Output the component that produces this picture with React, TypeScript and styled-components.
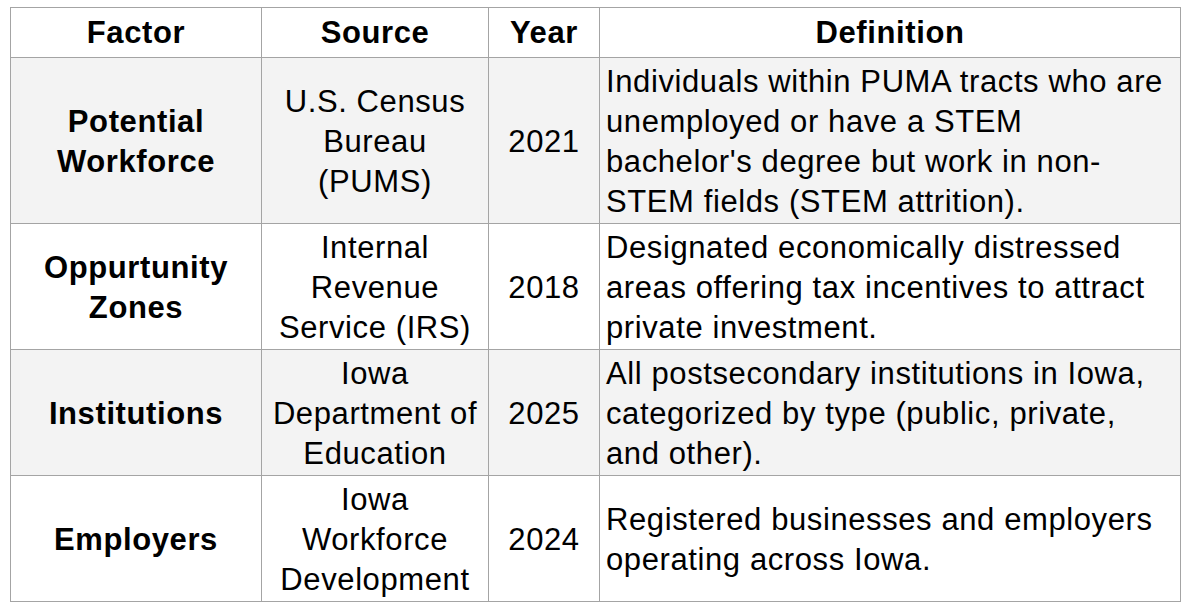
import React from 'react';
import styled, { createGlobalStyle } from 'styled-components';

type Row = {
  factor: string[];
  source: string[];
  year: string;
  definition: string[];
  shaded?: boolean;
  height: number;
};

const rows: Row[] = [
  {
    factor: ['Potential', 'Workforce'],
    source: ['U.S. Census', 'Bureau', '(PUMS)'],
    year: '2021',
    definition: [
      'Individuals within PUMA tracts who are',
      'unemployed or have a STEM',
      "bachelor's degree but work in non-",
      'STEM fields (STEM attrition).',
    ],
    shaded: true,
    height: 166,
  },
  {
    factor: ['Oppurtunity', 'Zones'],
    source: ['Internal', 'Revenue', 'Service (IRS)'],
    year: '2018',
    definition: [
      'Designated economically distressed',
      'areas offering tax incentives to attract',
      'private investment.',
    ],
    height: 126,
  },
  {
    factor: ['Institutions'],
    source: ['Iowa', 'Department of', 'Education'],
    year: '2025',
    definition: [
      'All postsecondary institutions in Iowa,',
      'categorized by type (public, private,',
      'and other).',
    ],
    shaded: true,
    height: 126,
  },
  {
    factor: ['Employers'],
    source: ['Iowa', 'Workforce', 'Development'],
    year: '2024',
    definition: ['Registered businesses and employers', 'operating across Iowa.'],
    height: 126,
  },
];

export default function App() {
  return (
    <>
      <GlobalStyle />
      <Page>
        <Table>
          <colgroup>
            <col style={{ width: 251 }} />
            <col style={{ width: 227 }} />
            <col style={{ width: 111 }} />
            <col style={{ width: 581 }} />
          </colgroup>
          <thead>
            <TableRow $height={50}>
              <HeadCell>Factor</HeadCell>
              <HeadCell>Source</HeadCell>
              <HeadCell>Year</HeadCell>
              <HeadCell>Definition</HeadCell>
            </TableRow>
          </thead>
          <tbody>
            {rows.map((r) => (
              <TableRow key={r.year} $height={r.height} $shaded={r.shaded}>
                <FactorCell>
                  {r.factor.map((l, i) => (
                    <Line key={i}>{l}</Line>
                  ))}
                </FactorCell>
                <Cell>
                  {r.source.map((l, i) => (
                    <Line key={i}>{l}</Line>
                  ))}
                </Cell>
                <Cell>{r.year}</Cell>
                <DefinitionCell>
                  {r.definition.map((l, i) => (
                    <Line key={i}>{l}</Line>
                  ))}
                </DefinitionCell>
              </TableRow>
            ))}
          </tbody>
        </Table>
      </Page>
    </>
  );
}

const GlobalStyle = createGlobalStyle`
  body {
    margin: 0;
    background: #ffffff;
    font-family: "Liberation Sans", Arial, sans-serif;
  }
`;

const Page = styled.div`
  padding: 7px 0 0 10px;
`;

const Table = styled.table`
  border-collapse: collapse;
  table-layout: fixed;
  width: 1171px;
  font-size: 31px;
  letter-spacing: 0.6px;
  line-height: 40px;
  color: #000;
`;

const TableRow = styled.tr<{ $height: number; $shaded?: boolean }>`
  height: ${(p) => p.$height}px;
  background: ${(p) => (p.$shaded ? '#f3f3f3' : '#ffffff')};
`;

const HeadCell = styled.th`
  border: 1.5px solid #a4a4a4;
  padding: 0 6px;
  font-weight: 700;
  text-align: center;
  vertical-align: middle;
`;

const Cell = styled.td`
  border: 1.5px solid #a4a4a4;
  padding: 2px 6px 0;
  text-align: center;
  vertical-align: middle;
`;

const FactorCell = styled(Cell)`
  font-weight: 700;
`;

const DefinitionCell = styled(Cell)`
  text-align: left;
`;

const Line = styled.div`
  white-space: nowrap;
`;
